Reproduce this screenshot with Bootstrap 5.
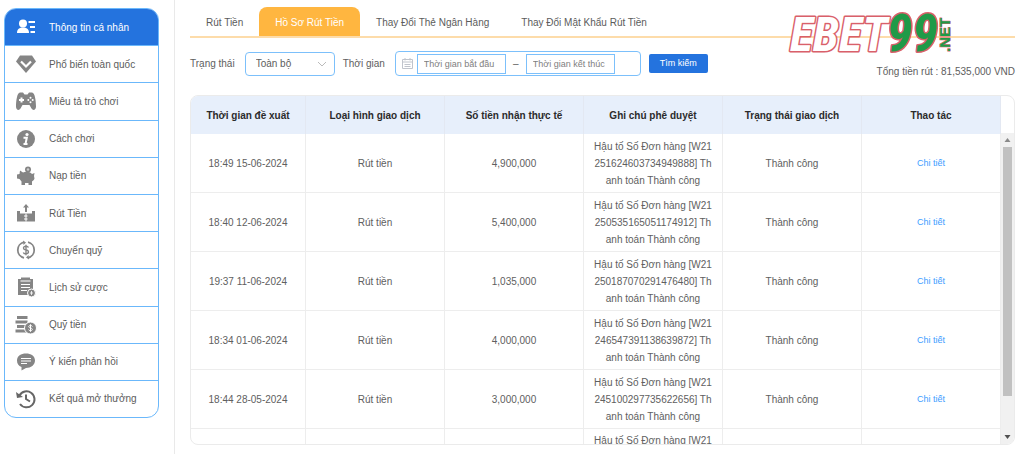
<!DOCTYPE html>
<html lang="vi">
<head>
<meta charset="utf-8">
<meta name="viewport" content="width=device-width, initial-scale=1">
<title>Hồ Sơ Rút Tiền</title>
<link href="https://cdn.jsdelivr.net/npm/bootstrap@5.3.0/dist/css/bootstrap.min.css" rel="stylesheet">
<style>
  body { font-family: "Liberation Sans", Arial, sans-serif; font-size: 10px; line-height: 17px; color: #606060; background: #fff; }
  .side-col { width: 175px; padding: 8px 15px 0 4px; border-right: 1px solid #e9e9e9; }
  .side-menu { min-height: 410px; border: 1px solid #6bb8fb; border-radius: 12px; overflow: hidden; }
  .side-menu li + li { border-top: 1px solid #6bb8fb; }
  .side-menu a { color: #5c5c5c; gap: 12px; padding-left: 10px; }
  .side-menu a.active { background: #2473de; color: #fff; }
  .side-menu svg { width: 22px; height: 22px; color: #858585; }
  .side-menu a.active svg { color: #fff; }
  .main-col { padding: 7px 9px 9px 15px; min-width: 0; }
  .top-tabs { border-bottom: 2px solid #fddcaa; }
  .top-tabs .nav-link { padding: 7px 16px 5px; color: #5c5c5c; border-radius: 8px 8px 0 0; }
  .top-tabs .nav-link.active { background: #ffb640; color: #fff; }
  .brand-mark { top: 0; right: 62px; width: 164px; height: 50px; overflow: visible; }
  .filters { padding: 13px 0 15px; }
  .filter-fields { margin-bottom: 4px; }
  .field-gap { margin: 0 8px 0 10px; }
  .field-box { border: 1px solid #7cc0fb; border-radius: 4px; background: #fff; }
  .status-select { width: 90px; height: 24px; padding: 0 10px; color: #5c5c5c; appearance: none; }
  .select-wrap svg { right: 8px; top: 8px; pointer-events: none; }
  .date-range { width: 246px; height: 25px; padding-left: 6px; }
  .date-range input { width: 89px; height: 20px; border: 1px solid #7cc0fb; padding: 0 6px; font-size: 9px; color: #666; }
  .date-range input::placeholder { color: #808080; opacity: 1; }
  .date-dash { width: 20px; text-align: center; }
  .btn-search { height: 19px; width: 59px; padding: 0; border-radius: 2px; background: #2473de; color: #fff; font-size: 9px; line-height: 19px; }
  .btn-search:hover { background: #1b62c4; color: #fff; }
  .grid-frame { border: 1px solid #ebebeb; border-radius: 8px; overflow: hidden; min-height: 0; }
  .grid-scroll { overflow-y: auto; scrollbar-width: none; }
  .grid-scroll::-webkit-scrollbar { display: none; }
  .record-grid { width: 100%; table-layout: fixed; border-collapse: separate; border-spacing: 0; text-align: center; }
  .record-grid th { position: sticky; top: 0; height: 38px; background: #e7effb; color: #2b2b2b; border-right: 1px solid #e3e8f2; }
  .record-grid td { height: 59px; padding: 3px 9px; border-right: 1px solid #ededed; border-bottom: 1px solid #ededed; word-break: break-all; }
  .record-grid th:first-child { width: 14.2%; }
  .record-grid a { color: #409eff; font-size: 9px; }
  .bar-col { width: 13px; padding-top: 37px; }
  .bar-track { background: #f1f1f1; }
  .bar-end { height: 14px; }
  .bar-thumb { background: #c1c1c1; height: 80%; margin: 0 2px; }
</style>
</head>
<body>
<div class="d-flex vh-100">
  <aside class="side-col flex-shrink-0">
    <ul class="side-menu list-unstyled d-flex flex-column mb-0">
      <li class="flex-fill d-flex"><a href="#" class="active flex-fill d-flex align-items-center text-decoration-none">
        <svg viewBox="0 0 22 22" fill="currentColor"><circle cx="8" cy="7.500" r="4"/><path d="M2 17c0-4 2.500-5.500 6-5.500s6 1.500 6 5.500z"/><path d="M13.500 6H20M15 11h5M15.500 16H20" stroke="currentColor" stroke-width="1.800"/></svg>Thông tin cá nhân</a></li>
      <li class="flex-fill d-flex"><a href="#" class="flex-fill d-flex align-items-center text-decoration-none">
        <svg viewBox="0 0 22 22" fill="currentColor"><path d="M5 2.500h12l4 6L11 20 1 8.500z"/><path d="M6 8.500l5 5 5-5" fill="none" stroke="#fff" stroke-width="2.200"/></svg>Phổ biến toàn quốc</a></li>
      <li class="flex-fill d-flex"><a href="#" class="flex-fill d-flex align-items-center text-decoration-none">
        <svg viewBox="0 0 22 22" fill="currentColor"><path d="M5 2.500h3l1.500 2h3l1.500-2h3c3 0 4 9 4 14 0 3.500-3 4.500-4.500 2L14.500 15h-7l-2 3.500C4 21 1 20 1 16.500c0-5 1-14 4-14z"/><path d="M6.500 7.500v5M4 10h5" stroke="#fff" stroke-width="2"/><g fill="#fff"><circle cx="15.500" cy="7.800" r="1"/><circle cx="15.500" cy="12.200" r="1"/><circle cx="13.300" cy="10" r="1"/><circle cx="17.700" cy="10" r="1"/></g></svg>Miêu tả trò chơi</a></li>
      <li class="flex-fill d-flex"><a href="#" class="flex-fill d-flex align-items-center text-decoration-none">
        <svg viewBox="0 0 22 22" fill="currentColor"><circle cx="11" cy="11" r="9"/><circle cx="12" cy="6.500" r="1.600" fill="#fff"/><path d="M8.500 9.800h3.300l-1.300 6.200M8.500 16h4" fill="none" stroke="#fff" stroke-width="2"/></svg>Cách chơi</a></li>
      <li class="flex-fill d-flex"><a href="#" class="flex-fill d-flex align-items-center text-decoration-none">
        <svg viewBox="0 0 22 22" fill="currentColor"><circle cx="13" cy="4.500" r="3"/><circle cx="13" cy="4.500" r="1.200" fill="#ccc"/><path d="M5 5.500l3 2c3-1.200 7-1 9 1.500l2.500-1-.5 3 .5 2.500c-.5 2-2 2.500-2.500 3V20h-3.500v-2H10v2H6.500v-3.500L4.500 14 2 13.500v-4l2.500-.5z"/></svg>Nạp tiền</a></li>
      <li class="flex-fill d-flex"><a href="#" class="flex-fill d-flex align-items-center text-decoration-none">
        <svg viewBox="0 0 22 22" fill="currentColor"><path d="M11 2l3 3.500h-2V10h-2V5.500H8z"/><path d="M2 9h3v2.500h12V9h3v10.500H2z"/><path d="M11 11.500v8M9 14h3.500M9 17h3.500" stroke="#fff"/></svg>Rút Tiền</a></li>
      <li class="flex-fill d-flex"><a href="#" class="flex-fill d-flex align-items-center text-decoration-none">
        <svg viewBox="0 0 22 22" fill="none" stroke="currentColor"><path d="M9 3.200a8 8 0 0 0 0 15.600M13 18.800a8 8 0 0 0 0-15.600" stroke-width="1.800"/><path d="M8 1.500L11 3.500 8.500 6zM14 20.500l-3-2 2.500-2.500z" fill="currentColor" stroke="none"/><path d="M13.500 8.500c-.5-1-1.400-1.300-2.500-1.300-3.400 0-3.200 3.300 0 3.700 3.400.5 3.200 4-.1 4-1.300 0-2.200-.5-2.600-1.500M11 5.700v10.600" stroke-width="1.400"/></svg>Chuyển quỹ</a></li>
      <li class="flex-fill d-flex"><a href="#" class="flex-fill d-flex align-items-center text-decoration-none">
        <svg viewBox="0 0 22 22" fill="currentColor"><path d="M3 3h3V1.500h9V3h3v16H3z"/><path d="M5.500 5h10M6 8.500h9M6 11.500h9M6 14.500h6" stroke="#fff" stroke-width="1.200"/><circle cx="16.500" cy="17" r="4" stroke="#fff"/><path d="M16.500 15v4M15 17h3" stroke="#fff" stroke-width=".8"/></svg>Lịch sử cược</a></li>
      <li class="flex-fill d-flex"><a href="#" class="flex-fill d-flex align-items-center text-decoration-none">
        <svg viewBox="0 0 22 22" fill="currentColor"><path d="M2 3.500h10.500M.5 8h12M2 12.500h9M.5 17h11" stroke="currentColor" stroke-width="3"/><circle cx="15.500" cy="14" r="6" stroke="#fff"/><path d="M17.400 12.500c-.4-.8-1-1-1.900-1-2.400 0-2.300 2.200 0 2.500 2.500.3 2.300 2.700 0 2.700-1 0-1.600-.4-1.900-1.100M15.500 10.300v7.500" fill="none" stroke="#fff"/></svg>Quỹ tiền</a></li>
      <li class="flex-fill d-flex"><a href="#" class="flex-fill d-flex align-items-center text-decoration-none">
        <svg viewBox="0 0 22 22" fill="currentColor"><path d="M11 2.500c5 0 9 2.500 9 7s-4 7.500-9 7.500L6.500 19.500V16C3.500 15 2 12.500 2 9.500c0-4.500 4-7 9-7z"/><path d="M6 7.500h10M6 10h10M6 12.500h6" stroke="#fff" stroke-width="1.200"/></svg>Ý kiến phản hồi</a></li>
      <li class="flex-fill d-flex"><a href="#" class="flex-fill d-flex align-items-center text-decoration-none">
        <svg viewBox="0 0 22 22" fill="none" stroke="#666" stroke-width="2"><path d="M4.500 7.500a8 8 0 1 1 .5 8.500"/><path d="M1 4l1 6 6-1z" fill="#666" stroke="none"/><path d="M11 6.500V11l4 2.500"/></svg>Kết quả mở thưởng</a></li>
    </ul>
  </aside>

  <main class="main-col flex-fill d-flex flex-column">
    <div class="position-relative">
      <nav class="top-tabs nav">
        <a class="nav-link" href="#">Rút Tiền</a>
        <a class="nav-link active" aria-current="page" href="#">Hồ Sơ Rút Tiền</a>
        <a class="nav-link" href="#">Thay Đổi Thẻ Ngân Hàng</a>
        <a class="nav-link" href="#">Thay Đổi Mật Khẩu Rút Tiền</a>
      </nav>
      <svg class="brand-mark position-absolute" viewBox="0 0 164 50" font-family="'Roboto Condensed','Liberation Sans',sans-serif" font-weight="700" stroke="#d9606a" stroke-linejoin="round" paint-order="stroke">
        <text x="1" y="44" font-size="48" font-style="italic" fill="#fff" stroke-width="3">EBET</text>
        <text x="98" y="44" font-size="52" font-style="italic" fill="#1f9a48" stroke-width="3">99</text>
        <text transform="translate(161 45) rotate(-90)" font-family="'Liberation Sans',sans-serif" font-size="15" fill="#1f9a48" stroke-width="1">.NET</text>
      </svg>
    </div>

    <form class="filters d-flex">
      <div class="filter-fields d-flex align-items-center">
        <label for="status">Trạng thái</label>
        <div class="select-wrap field-gap position-relative">
          <select id="status" class="status-select field-box d-block"><option>Toàn bộ</option></select>
          <svg class="position-absolute" width="10" height="8" viewBox="0 0 10 8" fill="none" stroke="#bbb"><path d="M1 2l4 4 4-4"/></svg>
        </div>
        <label for="from">Thời gian</label>
        <div class="date-range field-box field-gap d-flex align-items-center">
          <svg class="me-1" width="11" height="11" viewBox="0 0 11 11" fill="none" stroke="#c0c4cc"><path d="M.5 1.500h10v9H.5zM.5 4h10M3 0v2.500M8 0v2.500M2.500 6.500h6M2.500 8.500h6"/></svg>
          <input id="from" type="text" placeholder="Thời gian bắt đầu">
          <span class="date-dash">–</span>
          <input type="text" aria-label="Thời gian kết thúc" placeholder="Thời gian kết thúc">
        </div>
        <button type="submit" class="btn btn-search border-0">Tìm kiếm</button>
      </div>
      <span class="ms-auto align-self-end">Tổng tiền rút : 81,535,000 VND</span>
    </form>

    <div class="grid-frame flex-fill d-flex">
      <div class="grid-scroll flex-fill">
        <table class="record-grid">
          <thead><tr><th>Thời gian đề xuất</th><th>Loại hình giao dịch</th><th>Số tiền nhận thực tế</th><th>Ghi chú phê duyệt</th><th>Trạng thái giao dịch</th><th>Thao tác</th></tr></thead>
          <tbody>
            <tr><td>18:49 15-06-2024</td><td>Rút tiền</td><td>4,900,000</td><td>Hậu tố Số Đơn hàng [W21251624603734949888] Thanh toán Thành công</td><td>Thành công</td><td><a href="#" class="text-decoration-none">Chi tiết</a></td></tr>
            <tr><td>18:40 12-06-2024</td><td>Rút tiền</td><td>5,400,000</td><td>Hậu tố Số Đơn hàng [W21250535165051174912] Thanh toán Thành công</td><td>Thành công</td><td><a href="#" class="text-decoration-none">Chi tiết</a></td></tr>
            <tr><td>19:37 11-06-2024</td><td>Rút tiền</td><td>1,035,000</td><td>Hậu tố Số Đơn hàng [W21250187070291476480] Thanh toán Thành công</td><td>Thành công</td><td><a href="#" class="text-decoration-none">Chi tiết</a></td></tr>
            <tr><td>18:34 01-06-2024</td><td>Rút tiền</td><td>4,000,000</td><td>Hậu tố Số Đơn hàng [W21246547391138639872] Thanh toán Thành công</td><td>Thành công</td><td><a href="#" class="text-decoration-none">Chi tiết</a></td></tr>
            <tr><td>18:44 28-05-2024</td><td>Rút tiền</td><td>3,000,000</td><td>Hậu tố Số Đơn hàng [W21245100297735622656] Thanh toán Thành công</td><td>Thành công</td><td><a href="#" class="text-decoration-none">Chi tiết</a></td></tr>
            <tr class="align-top"><td></td><td></td><td></td><td>Hậu tố Số Đơn hàng [W21</td><td></td><td></td></tr>
          </tbody>
        </table>
      </div>
      <div class="bar-col flex-shrink-0 d-flex" aria-hidden="true">
        <div class="bar-track flex-fill d-flex flex-column">
          <svg class="bar-end" viewBox="0 0 13 14"><path d="M6.500 5l3 4h-6z" fill="#8a8a8a"/></svg>
          <div class="bar-thumb"></div>
          <svg class="bar-end mt-auto" viewBox="0 0 13 14"><path d="M6.500 9l3-4h-6z" fill="#505050"/></svg>
        </div>
      </div>
    </div>
  </main>
</div>
<script src="https://cdn.jsdelivr.net/npm/bootstrap@5.3.0/dist/js/bootstrap.bundle.min.js"></script>
</body>
</html>
